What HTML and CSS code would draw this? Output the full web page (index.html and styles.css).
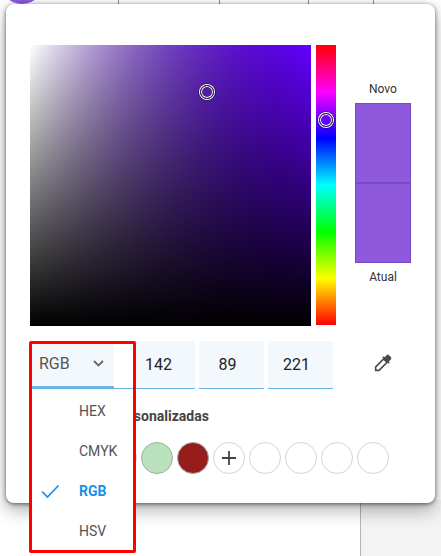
FILE: index.html
```html
<!DOCTYPE html>
<html lang="en">
<head>
    <meta charset="UTF-8">
    <meta name="viewport" content="width=device-width, initial-scale=1.0">
    <title>Seletor de cor</title>
    <link rel="stylesheet" href="styles.css">
</head>
<body>
    <div class="backdrop">
        <div class="avatar"></div>
        <div class="line line-a"></div>
        <div class="line line-b"></div>
        <div class="line line-c"></div>
        <div class="line line-d"></div>
        <div class="side">
        </div>
    </div>

    <div class="picker">
        <div class="top-row">
            <div class="sat-box">
                <div class="ring ring-sat"></div>
            </div>
            <div class="hue-bar">
                <div class="ring ring-hue"></div>
            </div>
            <div class="compare">
                <div class="compare-label">Novo</div>
                <div class="compare-box"></div>
                <div class="compare-box"></div>
                <div class="compare-label">Atual</div>
            </div>
        </div>

        <div class="input-row">
            <div class="mode-select">
                <span>RGB</span>
                <svg class="chevron" width="11" height="7" viewBox="0 0 11 7"><path d="M1 1 5.5 5.5 10 1" fill="none" stroke="#666" stroke-width="1.8"/></svg>
            </div>
            <div class="num-input">142</div>
            <div class="num-input">89</div>
            <div class="num-input">221</div>
            <svg class="dropper" width="19" height="19" viewBox="0 0 20 20">
                <path d="M11.2 5.2 14.8 8.8 6.4 17.2H2.8V13.6Z" fill="none" stroke="#4a4a4a" stroke-width="1.7"/>
                <path d="M9.8 3.8 11.2 2.4 12.2 3.4 14.6 1 Q15.6 0.2 16.8 1.2L18.8 3.2Q19.8 4.4 19 5.4L16.6 7.8 17.6 8.8 16.2 10.2Z" fill="#4a4a4a"/>
            </svg>
        </div>

        <div class="custom-title">Cores personalizadas</div>
        <div class="swatches">
            <div class="swatch swatch-purple"></div>
            <div class="swatch swatch-grey"></div>
            <div class="swatch swatch-green"></div>
            <div class="swatch swatch-red"></div>
            <div class="swatch">
                <svg width="16" height="16" viewBox="0 0 16 16"><path d="M8 1v14M1 8h14" stroke="#444" stroke-width="1.8"/></svg>
            </div>
            <div class="swatch"></div>
            <div class="swatch"></div>
            <div class="swatch"></div>
            <div class="swatch"></div>
        </div>
    </div>

    <div class="mode-menu">
        <div class="mode-option">HEX</div>
        <div class="mode-option">CMYK</div>
        <div class="mode-option selected">
            <svg class="check" width="20" height="16" viewBox="0 0 20 16"><path d="M2 8.5 7.5 14 18.5 2.5" fill="none" stroke="#1a8fe3" stroke-width="1.7"/></svg>
            RGB
        </div>
        <div class="mode-option">HSV</div>
    </div>
</body>
</html>
```

FILE: styles.css
```css
html, body {
    margin: 0;
    height: 100%;
}

body {
    width: 441px;
    height: 556px;
    position: relative;
    overflow: hidden;
    background-color: #fff;
    font-family: Roboto, "Liberation Sans", sans-serif;
    color: #333;
}

.backdrop {
    position: absolute;
    inset: 0;
}

.avatar {
    position: absolute;
    left: 0;
    top: -40px;
    width: 44px;
    height: 44px;
    border-radius: 50%;
    background-color: #8e59dd;
}

.line {
    position: absolute;
    top: 0;
    width: 1px;
    height: 4px;
    background-color: #8c8c8c;
}

.line-a {
    left: 118px;
}

.line-b {
    left: 219px;
}

.line-c {
    left: 308px;
}

.line-d {
    left: 373px;
}

.side {
    position: absolute;
    left: 360px;
    top: 500px;
    right: 0;
    bottom: 0;
    box-sizing: border-box;
    border-left: 1px solid #b5b5b5;
    background-color: #f3f3f3;
}

.picker {
    position: absolute;
    left: 6px;
    top: 4px;
    width: 429px;
    height: 499px;
    box-sizing: border-box;
    padding: 41px 24px 0;
    background-color: #fff;
    border-radius: 8px;
    box-shadow: 0 7px 18px rgba(0, 0, 0, 0.32), 0 1px 4px rgba(0, 0, 0, 0.55);
}

.top-row {
    display: flex;
    align-items: flex-start;
}

.sat-box {
    width: 281px;
    height: 281px;
    position: relative;
    background:
        linear-gradient(to bottom, rgba(0, 0, 0, 0), #000),
        linear-gradient(to right, rgba(100, 0, 255, 0), #6400ff),
        linear-gradient(to right, #fff, #000);
}

.ring {
    position: absolute;
    width: 14px;
    height: 14px;
    box-sizing: border-box;
    border: 1px solid #333;
    border-radius: 50%;
    box-shadow: 0 0 0 1px #fff, 0 0 0 2px rgba(0, 0, 0, 0.35), inset 0 0 0 1px #fff;
}

.ring-sat {
    left: 170px;
    top: 40px;
}

.hue-bar {
    width: 20px;
    height: 280px;
    margin-left: 5px;
    position: relative;
    background: linear-gradient(to bottom, #f00 0%, #f0f 16.67%, #00f 33.33%, #0ff 50%, #0f0 66.67%, #ff0 83.33%, #f00 100%);
}

.ring-hue {
    left: 3px;
    top: 68px;
}

.compare {
    width: 56px;
    margin-left: 19px;
    margin-top: 36px;
}

.compare-label {
    height: 22px;
    line-height: 16px;
    font-size: 12px;
    text-align: center;
    color: #333;
}

.compare-box {
    height: 80px;
    box-sizing: border-box;
    background-color: #8e59dd;
    border: 1px solid #7a48c4;
}

.compare-box + .compare-label {
    margin-top: 6px;
}

.input-row {
    display: flex;
    align-items: flex-start;
    margin-top: 15px;
    gap: 4px;
}

.mode-select {
    width: 100px;
    height: 48px;
    margin-right: -4px;
    box-sizing: border-box;
    padding: 0 9px;
    display: flex;
    align-items: center;
    background-color: #f3f8fc;
    border-bottom: 3px solid #6bb6e8;
    font-size: 16px;
    color: #555;
}

.chevron {
    margin-left: 23px;
}

.num-input {
    width: 65px;
    height: 48px;
    box-sizing: border-box;
    padding-right: 8px;
    background-color: #f3f8fc;
    border-bottom: 1px solid #6bb6e8;
    font-size: 16px;
    line-height: 47px;
    text-align: center;
    color: #222;
}

.dropper {
    margin: 13px 0 0 36px;
}

.custom-title {
    margin: 19px 0 0 43px;
    font-size: 14px;
    line-height: 16px;
    font-weight: 700;
    color: #444;
}

.swatches {
    display: flex;
    gap: 4px;
    margin: 18px 0 0 39px;
}

.swatch {
    width: 32px;
    height: 32px;
    box-sizing: border-box;
    border: 1px solid #d4d4d4;
    border-radius: 50%;
    display: flex;
    align-items: center;
    justify-content: center;
}

.swatch-purple {
    background-color: #8e59dd;
}

.swatch-grey {
    background-color: #ddd;
}

.swatch-green {
    background-color: #b9e2bc;
    border-color: #aaa;
}

.swatch-red {
    background-color: #971c1c;
    border-color: #aaa;
}

/* dropdown sits over the inputs, with the red annotation box around it */
.mode-menu {
    position: absolute;
    left: 29px;
    top: 341px;
    width: 107px;
    height: 212px;
    box-sizing: border-box;
    padding-top: 47px;
    border: 3px solid #f00;
    border-radius: 2px;
}

.mode-menu::before {
    content: "";
    position: absolute;
    left: 82px;
    right: 0;
    top: 0;
    height: 44px;
    background-color: #fff;
}

.mode-option {
    height: 40px;
    line-height: 40px;
    padding-left: 47px;
    font-size: 14px;
    color: #555;
    position: relative;
    background-color: #fff;
}

.mode-option:last-child {
    height: 39px;
}

.mode-option.selected {
    color: #1a8fe3;
    font-weight: 700;
}

.check {
    position: absolute;
    left: 8px;
    top: 12px;
}
```
